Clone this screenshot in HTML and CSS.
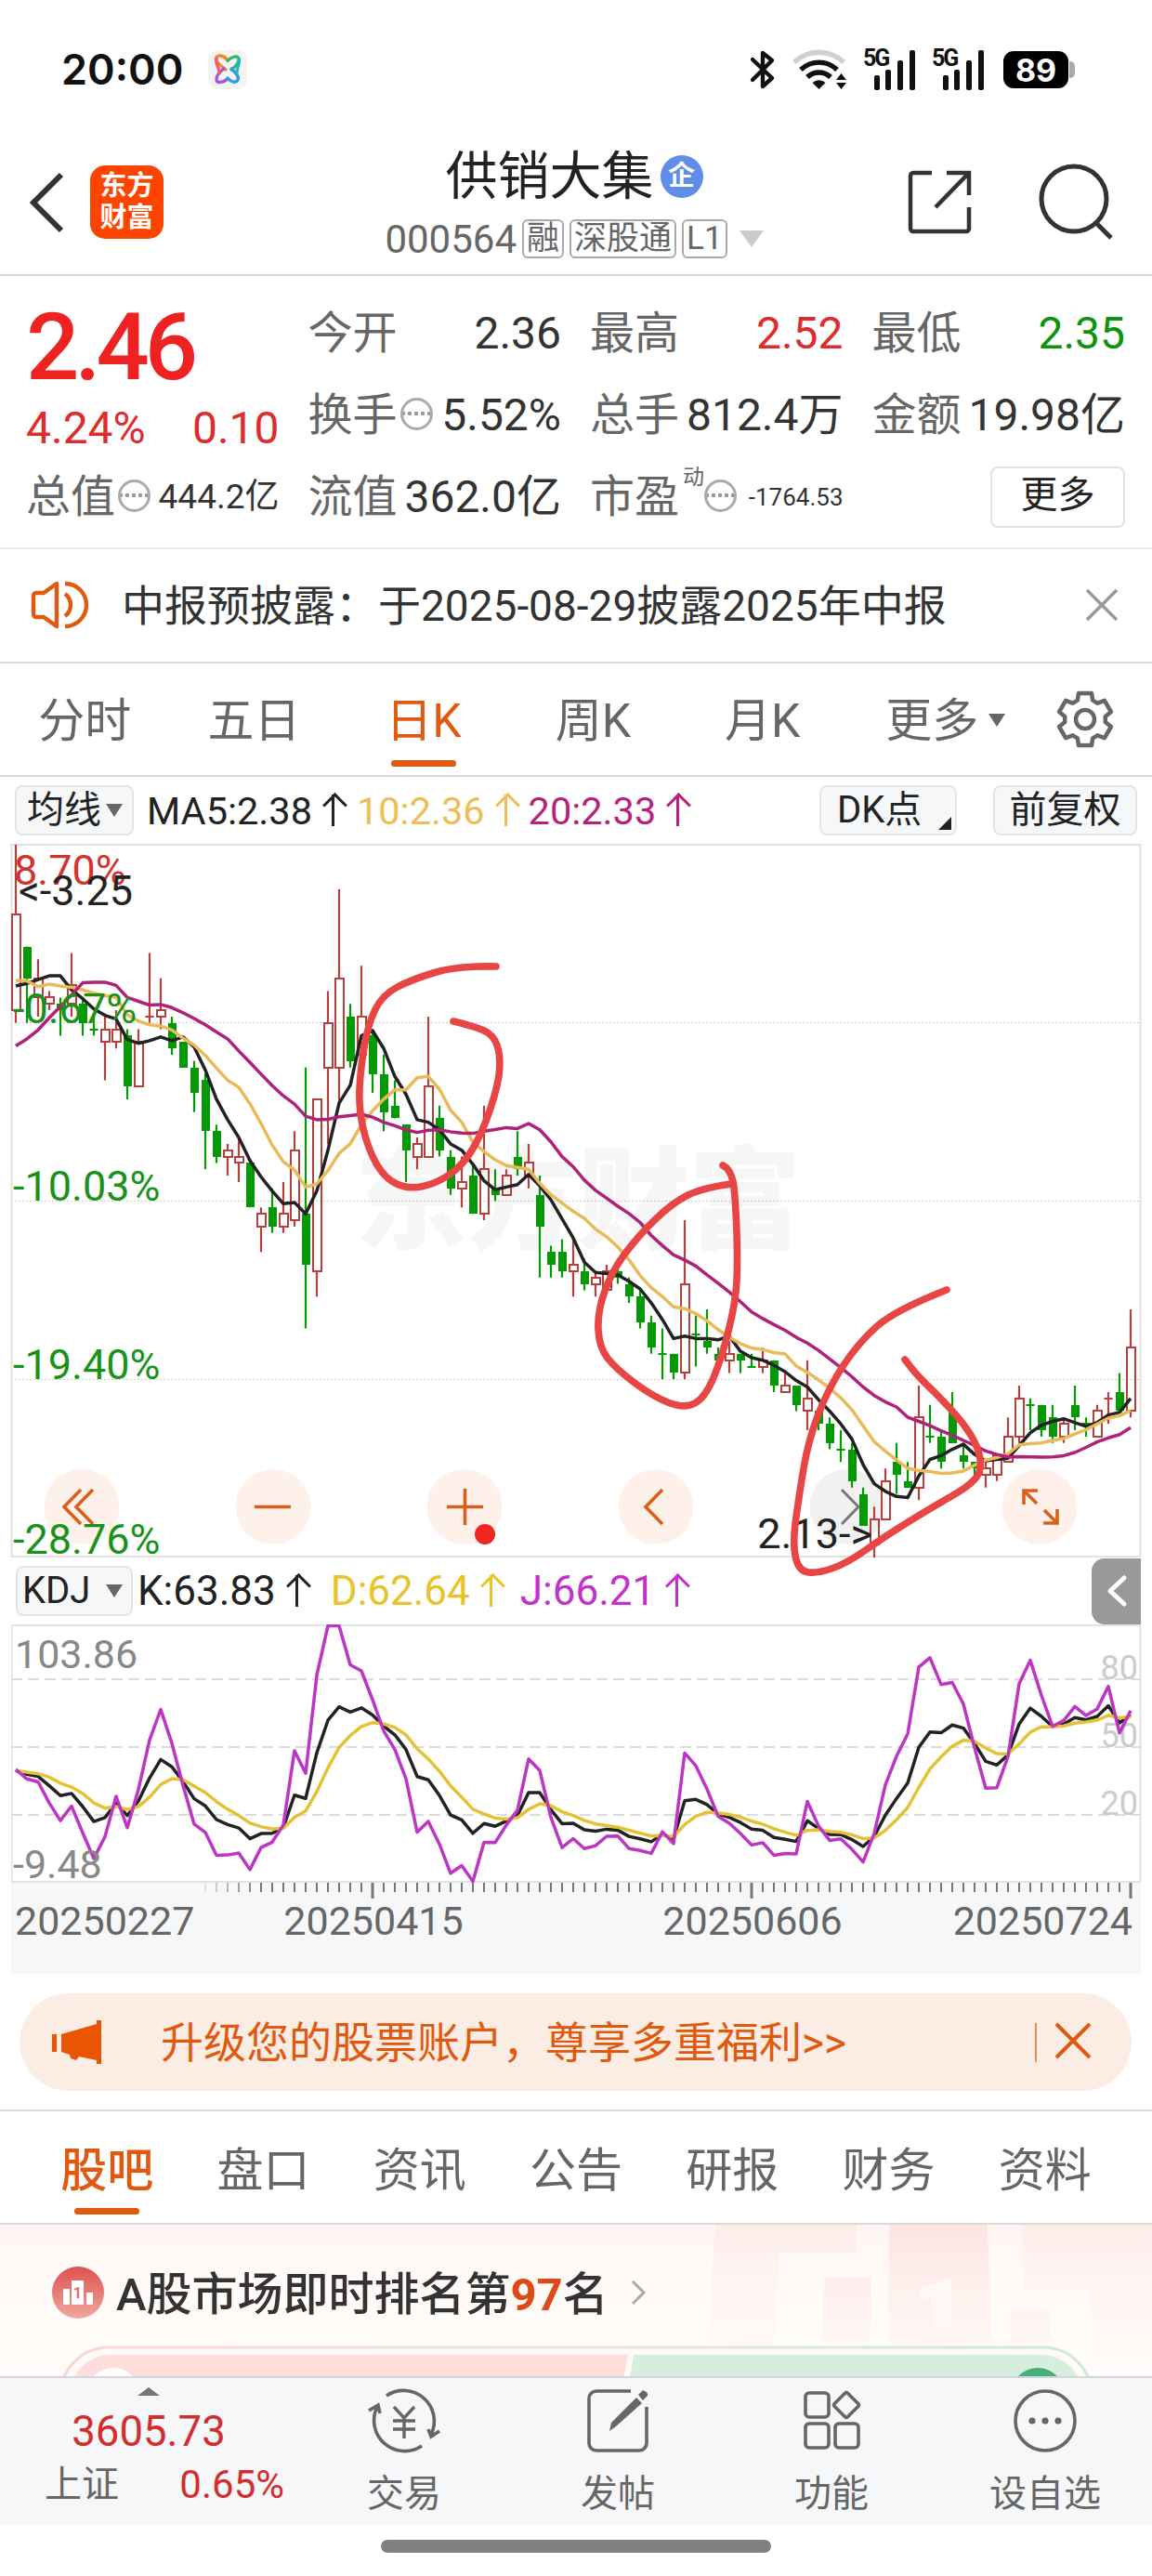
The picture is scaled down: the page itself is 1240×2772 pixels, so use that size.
FILE: index.html
```
<!DOCTYPE html>
<html lang="zh-CN">
<head>
    <meta charset="UTF-8">
    <meta name="viewport" content="width=device-width, initial-scale=1.0">
    <title>供销大集 000564</title>
    <link rel="stylesheet" href="styles.css">
</head>
<body>

<div class="status-bar">
    <span class="clock">20:00</span>
    <svg class="app-dot" width="42" height="42" viewBox="0 0 42 42" fill="none" stroke-width="3.4">
        <rect width="42" height="42" rx="10" fill="#f3f3f3"/>
        <path d="M20 22C12 15 7 12 9 8s9-2 13 4" stroke="#f08a2c"/>
        <path d="M20 12c5-5 12-7 13-3s-4 9-9 13" stroke="#35b86b"/>
        <path d="M22 30c-5 5-12 6-13 2s4-9 9-13" stroke="#a05be0"/>
        <path d="M24 19c5 5 10 9 8 13s-8 2-12-3" stroke="#2f9ce8"/>
        <path d="M9 8c-2 7 4 10 3 18" stroke="#ef5b6c"/>
        <path d="M33 9c2 6-3 10-2 17" stroke="#27b5c4"/>
    </svg>
    <div class="status-icons">
        <svg width="30" height="44" viewBox="0 0 30 44" fill="none" stroke="#111" stroke-width="4.4" stroke-linejoin="round" stroke-linecap="round">
            <path d="M4 11l21 20-10 9V4l10 8L4 33"/>
        </svg>
        <svg class="wifi" width="60" height="44" viewBox="0 0 60 44" fill="none" stroke-width="5.4">
            <path d="M2 14a38 38 0 0 1 53 0" stroke="#d0d0d0"/>
            <path d="M9 22a28 28 0 0 1 39 0" stroke="#111"/>
            <path d="M16 30a18 18 0 0 1 25 0" stroke="#111"/>
            <path d="M28.500 43l-7-7a10 10 0 0 1 14 0z" fill="#111"/>
            <path d="M47 33l5.500-7 5.500 7zM47 36l5.500 7 5.500-7z" fill="#111"/>
        </svg>
        <div class="signal"><b>5G</b><svg width="57" height="44" viewBox="0 0 57 44" fill="#111"><rect x="12" y="28" width="6" height="16" rx="2"/><rect x="24" y="22" width="6" height="22" rx="2"/><rect x="37" y="12" width="6" height="32" rx="2"/><rect x="50" y="1" width="6" height="43" rx="2"/></svg></div>
        <div class="signal"><b>5G</b><svg width="57" height="44" viewBox="0 0 57 44" fill="#111"><rect x="12" y="28" width="6" height="16" rx="2"/><rect x="24" y="22" width="6" height="22" rx="2"/><rect x="37" y="12" width="6" height="32" rx="2"/><rect x="50" y="1" width="6" height="43" rx="2"/></svg></div>
        <span class="battery">89</span><i class="battery-cap"></i>
    </div>
</div>

<header>
    <svg class="back" width="40" height="66" viewBox="0 0 40 66" fill="none" stroke="#333" stroke-width="6"><path d="M36 3L6 33l30 30"/></svg>
    <div class="logo">东方<br>财富</div>
    <div class="title">
        <div class="name">供销大集<span class="qi">企</span></div>
        <div class="code">000564<span class="tag">融</span><span class="tag">深股通</span><span class="tag">L1</span><i class="tri big"></i></div>
    </div>
    <svg class="share" width="72" height="72" viewBox="0 0 72 72" fill="none" stroke="#333" stroke-width="4.500">
        <path d="M27 4H7a3 3 0 0 0-3 3v57a3 3 0 0 0 3 3h57a3 3 0 0 0 3-3V41M43 4h24v24M67 4L31 41"/>
    </svg>
    <svg class="search" width="84" height="84" viewBox="0 0 84 84" fill="none" stroke="#333" stroke-width="5"><circle cx="39" cy="38" r="35"/><path d="M63 64l16 16"/></svg>
</header>

<section class="quote">
    <div class="last">
        <div class="price">2.46</div>
        <div class="change"><span>4.24%</span><span>0.10</span></div>
    </div>
    <div class="cell"><label>今开</label><span>2.36</span></div>
    <div class="cell"><label>最高</label><span class="red">2.52</span></div>
    <div class="cell"><label>最低</label><span class="green">2.35</span></div>
    <div class="cell"><label>换手<i class="info"></i></label><span>5.52%</span></div>
    <div class="cell"><label>总手</label><span>812.4万</span></div>
    <div class="cell"><label>金额</label><span>19.98亿</span></div>
    <div class="cell"><label>总值<i class="info"></i></label><span class="mid">444.2亿</span></div>
    <div class="cell"><label>流值</label><span>362.0亿</span></div>
    <div class="cell"><label>市盈<sup>动</sup><i class="info"></i></label><span class="small">-1764.53</span></div>
    <div class="cell end"><button class="more">更多</button></div>
</section>

<section class="notice">
    <svg width="62" height="54" viewBox="0 0 62 54" fill="none" stroke="#e0590f" stroke-width="4.400" stroke-linejoin="round">
        <path d="M28 4L14 14H6a3 3 0 0 0-3 3v20a3 3 0 0 0 3 3h8l14 10zM37 15a15 15 0 0 1 0 24M37 4a23 23 0 0 1 0 46"/>
    </svg>
    <span>中报预披露：于2025-08-29披露2025年中报</span>
    <svg class="close" width="36" height="36" viewBox="0 0 36 36" stroke="#999" stroke-width="3.500"><path d="M2 2l32 32M34 2L2 34"/></svg>
</section>

<nav class="periods">
    <span>分时</span>
    <span>五日</span>
    <span class="active">日K</span>
    <span>周K</span>
    <span>月K</span>
    <span>更多<i class="tri"></i></span>
    <svg class="gear" width="64" height="64" viewBox="-32 -32 64 64" fill="none" stroke="#666" stroke-width="4.500" stroke-linejoin="round">
        <path id="gear"/>
        <circle r="10"/>
    </svg>
</nav>

<div class="ma-row">
    <button>均线<i class="tri"></i></button>
    <span class="ma5">MA5:2.38<i class="up"></i></span>
    <span class="ma10">10:2.36<i class="up"></i></span>
    <span class="ma20">20:2.33<i class="up"></i></span>
    <button class="dk">DK点<i class="corner"></i></button>
    <button class="fq">前复权</button>
</div>

<svg class="kline" id="kline" width="1217" height="768" viewBox="12 908 1217 768"></svg>

<div class="kdj-row">
    <button>KDJ<i class="tri"></i></button>
    <span class="k">K:63.83<i class="up"></i></span>
    <span class="d">D:62.64<i class="up"></i></span>
    <span class="j">J:66.21<i class="up"></i></span>
    <div class="drawer"><svg width="24" height="36" viewBox="0 0 24 36" fill="none" stroke="#fff" stroke-width="5" stroke-linecap="round" stroke-linejoin="round"><path d="M19 4L4 18l15 14"/></svg></div>
</div>

<svg class="kdj" id="kdj" width="1217" height="376" viewBox="12 1748 1217 376"></svg>

<div class="promo">
    <svg width="56" height="48" viewBox="0 0 56 48" fill="#ea5504"><path d="M1 15h5v19H1zM11 15L49 4V0h5v47h-5v-4l-19-4-3 4-6-2-1-4-9-3z"/></svg>
    <span>升级您的股票账户，尊享多重福利&gt;&gt;</span>
    <i class="bar"></i>
    <svg class="x" width="40" height="40" viewBox="0 0 40 40" stroke="#e0590f" stroke-width="4"><path d="M2 2l36 36M38 2L2 38"/></svg>
</div>

<nav class="sections">
    <span class="active">股吧</span>
    <span>盘口</span>
    <span>资讯</span>
    <span>公告</span>
    <span>研报</span>
    <span>财务</span>
    <span>资料</span>
</nav>

<section class="rank">
    <svg class="podium" width="1240" height="164" viewBox="0 0 1240 164">
        <defs>
            <linearGradient id="fade" x2="0" y2="1"><stop offset="0" stop-color="#fbdedd" stop-opacity=".75"/><stop offset="1" stop-color="#fdeeea" stop-opacity=".35"/></linearGradient>
            <linearGradient id="edge"><stop offset="0" stop-color="#f8d6d2"/><stop offset=".5" stop-color="#e8e6da"/><stop offset="1" stop-color="#cfe9d8"/></linearGradient>
        </defs>
        <g fill="url(#fade)">
            <path opacity=".5" d="M770 0h152v30h-84l-5 110h-73zM1099 0h141v140h-62l-6-70h-70z"/>
            <path d="M957 0h106l4 128H956z"/>
            <path opacity=".7" d="M888 57h49v71h-52zM1088 91h42v40h-44z"/>
        </g>
        <path fill="#fff8f5" d="M991 68l33-11v55h-21V77l-12 5z"/>
        <rect x="65" y="132" width="1110" height="104" rx="52" fill="#fffaf7" stroke="url(#edge)" stroke-width="3"/>
        <path fill="#fddedb" d="M75 184a44 44 0 0 1 44-44h557l-8 40z"/>
        <path fill="#d7eedd" d="M682 140h440a44 44 0 0 1 43 44H675z"/>
        <circle cx="122" cy="183" r="29" fill="#fff"/>
        <circle cx="1117" cy="183" r="29" fill="#45ae79"/>
    </svg>
    <div class="rank-title">
        <svg width="56" height="56" viewBox="0 0 56 56">
            <defs><linearGradient id="medal" x2="0" y2="1"><stop offset="0" stop-color="#dc5350"/><stop offset="1" stop-color="#f2a6a0"/></linearGradient></defs>
            <circle cx="28" cy="28" r="28" fill="url(#medal)"/>
            <path fill="#fff" d="M12 24h7v17h-7zM21 15h13v26H21zM37 28h7v13h-7z"/>
            <text class="medal-no" x="27.500" y="34">1</text>
        </svg>
        <span>A股市场即时排名第<b>97</b>名</span>
        <svg class="go" width="20" height="30" viewBox="0 0 20 30" fill="none" stroke="#aaa" stroke-width="3"><path d="M3 3l12 12L3 27"/></svg>
    </div>
</section>

<footer>
    <div class="index">
        <i class="tri-up"></i>
        <div class="index-value">3605.73</div>
        <div class="index-line"><span>上证</span><em>0.65%</em></div>
    </div>
    <div class="item">
        <svg width="80" height="72" viewBox="-40 -36 80 72" fill="none" stroke="#666" stroke-width="3.600">
            <path d="M-19-27A33 33 0 0 1 29 15M19 27A33 33 0 0 1-29-15M-38-11l10-6 2 9M38 11l-9 6-3-8"/>
            <path d="M-11-15L0-3l11-12M0-3v22M-12 0h24M-12 9h24" stroke-width="3.400"/>
        </svg>
        <span>交易</span>
    </div>
    <div class="item">
        <svg width="80" height="72" viewBox="-40 -36 80 72" fill="none" stroke="#666" stroke-width="3.600">
            <path d="M14-32h-37a8 8 0 0 0-8 8v48a8 8 0 0 0 8 8h46a8 8 0 0 0 8-8v-39"/>
            <path d="M-9 11l2-9 27-27 6 6L-2 6z" fill="#666" stroke="none"/>
            <path d="M22-28l5-5q6 2 5 6l-5 5z" fill="#666" stroke="none"/>
        </svg>
        <span>发帖</span>
    </div>
    <div class="item">
        <svg width="80" height="72" viewBox="-40 -36 80 72" fill="none" stroke="#666" stroke-width="3.600" stroke-linejoin="round">
            <rect x="-28" y="-30" width="25" height="26" rx="4"/>
            <rect x="-28" y="3" width="25" height="26" rx="4"/>
            <rect x="4" y="3" width="25" height="26" rx="4"/>
            <rect x="6" y="-27" width="20" height="20" rx="2" transform="rotate(45 16 -17)"/>
        </svg>
        <span>功能</span>
    </div>
    <div class="item">
        <svg width="80" height="72" viewBox="-40 -36 80 72" fill="none" stroke="#666" stroke-width="3.600">
            <circle r="32"/>
            <g fill="#666" stroke="none"><circle cx="-14" r="3.600"/><circle r="3.600"/><circle cx="14" r="3.600"/></g>
        </svg>
        <span>设自选</span>
    </div>
</footer>
<div class="home"></div>

<script src="chart.js"></script>
</body>
</html>
```

FILE: styles.css
```
* {
    box-sizing: border-box;
}

body {
    margin: 0;
    width: 1240px;
    height: 2772px;
    overflow: hidden;
    background: #fff;
    color: #333;
    font-family: Roboto, "Noto Sans CJK SC", sans-serif;
    font-size: 46px;
}

i, em {
    font-style: normal;
}

button {
    font-family: inherit;
    color: #222;
    margin: 0;
}

svg {
    display: block;
    flex: none;
}

/* status bar */
.status-bar {
    height: 140px;
    padding: 9px 83px 0 66px;
    display: flex;
    align-items: center;
}

.clock {
    font-family: Inter, sans-serif;
    font-weight: 600;
    font-size: 45px;
    color: #111;
    width: 158px;
}

.status-icons {
    margin-left: auto;
    display: flex;
    align-items: center;
}

.wifi {
    margin-left: 17px;
}

.signal {
    position: relative;
    margin-left: 16px;
}

.signal + .signal {
    margin-left: 17px;
}

.signal b {
    position: absolute;
    left: 0;
    top: -3px;
    font: 700 25px/25px Roboto, sans-serif;
    color: #111;
    letter-spacing: -2px;
}

.battery {
    margin-left: 20px;
    width: 70px;
    height: 40px;
    border-radius: 11px;
    background: #000;
    color: #fff;
    font: 700 34px/41px Inter, sans-serif;
    text-align: center;
}

.battery-cap {
    width: 6px;
    height: 18px;
    margin-left: 1px;
    border-radius: 0 5px 5px 0;
    background: #aaa;
}

/* header */
header {
    height: 157px;
    border-bottom: 2px solid #d9d9d9;
    display: flex;
    padding-left: 30px;
}

.back {
    margin-top: 45px;
}

.logo {
    width: 79px;
    height: 79px;
    margin: 38px 0 0 27px;
    padding-top: 5px;
    border-radius: 16px;
    background: #ff4400;
    color: #fff;
    font-size: 29px;
    font-weight: 700;
    line-height: 34px;
    text-align: center;
}

.title {
    width: 640px;
    margin-left: 122px;
    display: flex;
    flex-direction: column;
    align-items: center;
}

.name {
    height: 86px;
    padding-top: 14px;
    font-size: 56px;
    line-height: 68px;
    color: #222;
    display: flex;
    align-items: center;
}

.qi {
    width: 46px;
    height: 46px;
    margin-left: 7px;
    border-radius: 50%;
    background: #5f8de8;
    color: #fff;
    font-size: 29px;
    font-weight: 700;
    line-height: 44px;
    text-align: center;
}

.code {
    display: flex;
    align-items: center;
    height: 62px;
    font-size: 42px;
    color: #666;
}

.tag {
    height: 42px;
    margin-left: 6px;
    padding: 0 3px;
    border: 2px solid #aaa;
    border-radius: 6px;
    font-size: 35px;
    line-height: 37px;
}

.tri {
    display: inline-block;
    border: 9px solid transparent;
    border-top: 14px solid #666;
    border-bottom: 0;
}

.tri.big {
    margin-left: 13px;
    border-width: 18px 13px 0;
    border-top-color: #ccc;
}

.share {
    margin: 42px 0 0 38px;
}

.search {
    margin: 36px 0 0 69px;
}

/* quote grid */
.quote {
    height: 294px;
    padding: 18px 29px 0 28px;
    border-bottom: 2px solid #ececec;
    display: grid;
    grid-template-columns: repeat(4, 1fr);
    grid-auto-rows: 88px;
    column-gap: 31px;
}

.last {
    grid-row: span 2;
    color: #ef2222;
}

.price {
    margin-top: 4px;
    font-size: 101px;
    font-weight: 500;
    line-height: 110px;
    letter-spacing: -5px;
}

.change {
    display: flex;
    justify-content: space-between;
    font-size: 48px;
    line-height: 64px;
    color: #df2b2b;
}

.cell {
    display: flex;
    justify-content: space-between;
    font-size: 48px;
    line-height: 88px;
    white-space: nowrap;
}

.cell label {
    color: #666;
    display: flex;
    align-items: center;
    position: relative;
}

.cell sup {
    font-size: 23px;
    line-height: 26px;
    margin: -42px -3px 0 4px;
}

.cell .mid {
    font-size: 37px;
}

.cell .small {
    font-size: 26px;
}

.cell.end {
    justify-content: flex-end;
    align-items: center;
}

.red {
    color: #df2b2b;
}

.green {
    color: #0c940c;
}

.info {
    width: 35px;
    height: 35px;
    margin: -3px 0 0 3px;
    border: 3px solid #aaa;
    border-radius: 50%;
    background: radial-gradient(circle at 3px 3px, #999 2px, transparent 2.6px) 4px 11px / 7px 7px repeat-x;
}

.more {
    width: 145px;
    height: 66px;
    border: 2px solid #e2e2e2;
    border-radius: 8px;
    background: #fff;
    font-size: 40px;
    line-height: 56px;
    padding: 0 0 5px;
}

/* notice */
.notice {
    height: 123px;
    padding: 0 36px 2px 33px;
    border-bottom: 2px solid #d9d9d9;
    display: flex;
    align-items: center;
}

.notice span {
    margin: -6px 0 0 36px;
}

.notice .close {
    margin-left: auto;
}

/* tabs */
.periods {
    height: 122px;
    border-bottom: 2px solid #d9d9d9;
    display: grid;
    grid-template-columns: repeat(6, 182.4px) 1fr;
    align-items: center;
    text-align: center;
    color: #666;
    font-size: 50px;
    line-height: 125px;
}

.periods span {
    height: 120px;
}

nav span {
    position: relative;
}

nav .tri {
    position: absolute;
    right: 12px;
    top: 54px;
}

nav .active {
    color: #e0590f;
}

nav .active::after {
    content: "";
    position: absolute;
    left: 50%;
    bottom: 9px;
    width: 70px;
    height: 7px;
    margin-left: -35px;
    border-radius: 4px;
    background: #e0590f;
}

.gear {
    margin-left: 42px;
}

/* indicator rows */
.ma-row, .kdj-row {
    display: flex;
    align-items: center;
    height: 72px;
    padding-left: 16px;
    font-size: 41.5px;
    white-space: nowrap;
}

.ma-row button, .kdj-row button {
    height: 54px;
    width: 128px;
    padding: 0 10px 0 11px;
    border: 2px solid #e1e4e9;
    border-radius: 8px;
    background: #f6f7f9;
    font-size: 40px;
    line-height: 48px;
    display: flex;
    align-items: center;
    justify-content: space-between;
}

.ma-row span, .kdj-row span {
    display: flex;
    align-items: center;
}

.up {
    width: 22px;
    height: 34px;
    margin-left: 12px;
    background: linear-gradient(currentColor, currentColor) center / 3px 100% no-repeat;
    position: relative;
}

.up::before {
    content: "";
    position: absolute;
    left: 3px;
    top: 2px;
    width: 16px;
    height: 16px;
    border-left: 3px solid;
    border-top: 3px solid;
    transform: rotate(45deg);
}

.ma5 {
    margin-left: 14px;
    color: #222;
}

.ma10 {
    margin-left: 14px;
    color: #efbd55;
}

.ma20 {
    margin-left: 13px;
    color: #b8217b;
}

.ma-row .dk {
    margin-left: auto;
    width: 148px;
    padding: 0 4px 0 17px;
}

.corner {
    align-self: flex-end;
    margin-bottom: 4px;
    border-left: 14px solid transparent;
    border-bottom: 14px solid #222;
}

.ma-row .fq {
    width: 155px;
    margin: 0 16px 0 39px;
    justify-content: center;
    padding: 0;
}

.kline {
    margin-left: 12px;
    position: relative;
    z-index: 1;
    overflow: visible;
}

.kdj-row {
    padding-left: 17px;
    font-size: 44px;
}

.kdj-row button {
    width: 126px;
    padding: 0 9px 0 5px;
}

.k {
    margin-left: 5px;
    color: #222;
}

.d {
    margin-left: 25px;
    color: #e8c42c;
}

.j {
    margin-left: 20px;
    color: #c430cc;
}

.drawer {
    width: 53px;
    height: 71px;
    margin: 0 12px 0 auto;
    padding: 17px 0 0 16px;
    border-radius: 14px 0 0 14px;
    background: #999;
}

.kdj {
    margin-left: 12px;
}

/* chart text and shapes */
.label {
    font-size: 43px;
}

.percent {
    font-size: 45px;
}

.level {
    font-size: 36px;
    fill: #ccc;
}

.watermark {
    font-size: 120px;
    font-weight: 900;
    fill: #f6f6f6;
}

.line {
    fill: none;
    stroke-width: 3.5;
    stroke-linejoin: round;
}

.pen {
    fill: none;
    stroke: #e84545;
    stroke-width: 7.6;
    stroke-linecap: round;
    stroke-linejoin: round;
}

/* promo */
.promo {
    width: 1197px;
    height: 105px;
    margin: 21px 0 20px 21px;
    padding: 0 43px 0 34px;
    border-radius: 53px;
    background: #fcede4;
    color: #e0590f;
    display: flex;
    align-items: center;
}

.promo span {
    margin: -7px 0 0 62px;
}

.promo .bar {
    width: 2px;
    height: 42px;
    margin-left: auto;
    background: #e88a55;
}

.promo .x {
    margin: -3px 0 0 19px;
}

.sections {
    height: 124px;
    padding: 0 31px;
    border-top: 2px solid #d9d9d9;
    border-bottom: 2px solid #d9d9d9;
    display: grid;
    grid-template-columns: repeat(7, 1fr);
    grid-template-rows: 120px;
    text-align: center;
    color: #666;
    font-size: 50px;
    line-height: 128px;
}

.sections .active {
    font-weight: 500;
}

/* rank card */
.rank {
    position: relative;
    height: 163px;
    overflow: hidden;
    background: linear-gradient(#fff5f3, #fffaf7 30%, #fffcfa);
}

.podium {
    position: absolute;
    left: 0;
    top: 0;
}

.rank-title {
    position: relative;
    display: flex;
    align-items: center;
    height: 146px;
    padding-left: 56px;
    font-size: 49px;
    font-weight: 500;
}

.rank-title span {
    margin: -6px 0 0 13px;
}

.rank-title b {
    color: #dc4a18;
}

.go {
    margin-left: 23px;
}

.medal-no {
    font-size: 17px;
    font-weight: 700;
    text-anchor: middle;
    fill: #e2706b;
}

/* bottom bar */
footer {
    height: 160px;
    border-top: 2px solid #d3d6dc;
    background: #f6f7f9;
    display: grid;
    grid-template-columns: 320px repeat(4, 230px);
    color: #666;
    font-size: 40px;
}

.index {
    padding-top: 10px;
    display: flex;
    flex-direction: column;
    align-items: center;
}

.tri-up {
    border: 12px solid transparent;
    border-bottom: 9px solid #777;
    border-top: 0;
}

.index-value {
    margin-top: 12px;
    font-size: 45.5px;
    line-height: 54px;
    color: #d22e2e;
}

.index-line {
    width: 258px;
    margin-left: 34px;
    line-height: 60px;
    display: flex;
    justify-content: space-between;
}

.index-line em {
    font-size: 42px;
    color: #d22e2e;
}

.item {
    padding-top: 10px;
    display: flex;
    flex-direction: column;
    align-items: center;
}

.item span {
    margin-top: 15px;
    line-height: 56px;
}

.home {
    width: 420px;
    height: 14px;
    margin: 16px auto 0;
    border-radius: 7px;
    background: #808080;
}
```

FILE: chart.js
```
// Each bar: [high, body top, body bottom, low, up], in cents above 2.13
const bars = [
    [112,101,86,84,1],[96,96,91,84,0],[94,91,88,85,1],[89,88,87,86,1],[88,87,86,82,0],
    [95,90,87,85,1],[88,87,84,82,0],[85,83,83,82,0],[85,83,81,75,1],[86,83,81,80,1],
    [83,82,74,72,0],[83,81,74,74,1],[95,85,85,84,1],[91,86,85,83,1],[85,84,80,79,0],
    [81,81,77,77,0],[78,77,73,70,0],[76,75,67,61,0],[68,67,63,62,0],[65,64,63,60,1],
    [66,63,62,59,1],[62,62,55,55,0],[55,54,52,48,1],[58,55,52,51,0],[59,54,52,51,1],
    [67,64,53,52,1],[77,54,46,36,0],[72,72,45,41,1],[89,84,77,65,1],[105,91,77,71,1],
    [87,85,78,77,0],[93,85,79,77,1],[83,82,76,73,0],[79,76,70,67,0],[75,71,69,69,0],
    [68,68,64,59,0],[66,65,63,61,1],[85,74,63,63,1],[71,69,64,63,0],[64,63,58,57,0],
    [63,59,58,55,1],[62,60,54,54,0],[71,61,54,53,1],[61,58,57,56,0],[61,60,57,57,1],
    [67,63,61,60,0],[65,62,60,58,1],[60,57,52,44,0],[49,48,46,44,0],[50,48,45,44,0],
    [50,46,45,41,1],[47,45,43,42,0],[45,44,43,41,1],[46,45,42,42,1],[47,45,44,43,0],
    [44,43,41,40,0],[42,41,37,36,0],[38,37,33,32,0],[36,32,32,28,0],[32,32,29,28,0],
    [53,43,29,28,1],[38,35,35,30,0],[39,34,33,32,0],[33,32,31,31,0],[34,32,31,29,1],
    [32,32,31,29,0],[32,30,30,30,0],[33,31,30,29,1],[31,31,27,26,0],[29,27,26,26,1],
    [27,27,24,23,0],[31,25,23,20,1],[23,23,21,20,0],[22,21,18,17,0],[20,17,17,15,0],
    [18,17,12,11,0],[11,10,5,5,0],[8,6,2,0,1],[14,12,6,6,1],[18,15,13,10,0],
    [15,12,11,11,0],[27,22,11,9,1],[24,19,19,18,0],[20,19,15,14,0],[26,23,18,18,0],
    [18,16,15,14,0],[15,15,14,13,0],[15,14,13,11,1],[16,16,13,12,1],[22,19,15,15,1],
    [27,25,19,18,1],[25,24,24,20,0],[24,24,20,19,0],[24,22,19,18,0],[22,21,19,18,1],
    [27,24,22,20,0],[22,21,21,19,0],[24,23,19,19,1],[26,25,25,21,1],[29,26,23,23,0],
    [39,33,23,22,1]
];
// averages for the bars whose window starts before the chart
const seed5 = [89.8, 90.2, 90.8, 91.4];
const seed10 = [90.7, 90.6, 89.7, 90.1, 89.8, 89.6, 89.2, 88.7, 88.3];
const seed20 = [80.4, 81.5, 82.9, 84.8, 86.6, 88.4, 90.3, 90.4, 90.4, 89.9, 88, 87.4, 86.8, 86.9, 86.4, 85.6, 84.7, 83.7, 82.6];
const kVals = [39.7, 37.9, 37, 32.9, 28.5, 29.5, 23.7, 17.1, 18.8];
const dVals = [39.5, 38.9, 38.2, 36.7, 34, 32.3, 29.5, 25.3, 23];

const x = i => 17 + i * 12;
const y = n => 1676 - n * 6.848;
const yk = v => Math.max(1749.5, Math.min(2024.5, 1953 - (v - 20) * 2.433));
const close = bars.map(b => b[4] ? b[1] : b[2]);

function average(n, seed) {
    return close.map((c, i) => i < n - 1 ? seed[i] : close.slice(i - n + 1, i + 1).reduce((a, b) => a + b) / n);
}

function line(values, scale, color) {
    return `<polyline class="line" stroke="${color}" points="${values.map((v, i) => x(i) + ',' + scale(v).toFixed(1)).join(' ')}"/>`;
}

function hline(yy, color, dash) {
    return `<path d="M12 ${yy}H1228" stroke="${color}" stroke-width="${dash === '2 2' ? 1 : 2}" ${dash ? `stroke-dasharray="${dash}"` : ''}/>`;
}

function text(tx, ty, str, color, anchor, cls) {
    return `<text x="${tx}" y="${ty}" class="${cls || 'label'}" fill="${color}" text-anchor="${anchor || 'start'}">${str}</text>`;
}

function candle(b, i) {
    const color = b[4] ? '#b5403c' : '#059a05';
    const top = Math.round(y(b[1])), bottom = Math.round(y(b[2]));
    let out = `<path stroke="${color}" stroke-width="2.200" fill="none" d="M${x(i)} ${y(b[0])}V${top}M${x(i)} ${bottom}V${y(b[3])}`;
    if (b[1] === b[2]) {
        return out + `M${x(i) - 4.500} ${top}h9"/>`;
    }
    out += '"/>';
    if (b[4]) {
        return out + `<rect x="${x(i) - 4}" y="${top}" width="9" height="${bottom - top}" fill="none" stroke="${color}" stroke-width="2"/>`;
    }
    return out + `<rect x="${x(i) - 4}" y="${top}" width="9" height="${bottom - top}" fill="${color}"/>`;
}

// smooth hand-drawn stroke through the points
function pen(p) {
    let d = `M${p[0]}`;
    for (let i = 1; i < p.length - 1; i++) {
        const end = i === p.length - 2 ? p[i + 1] : [(p[i][0] + p[i + 1][0]) / 2, (p[i][1] + p[i + 1][1]) / 2];
        d += `Q${p[i]} ${end}`;
    }
    return `<path class="pen" d="${d}"/>`;
}

function drawKline() {
    let s = text(382, 1335, '东方财富', '#f6f6f6', 'start', 'watermark');
    s += [1100.5, 1292.5, 1484.5].map(v => hline(v, '#ccc', '2 2')).join('');
    s += '<path d="M12.500 909H1227.500V1675H12.500z" fill="none" stroke="#e2e2e2" stroke-width="2"/>';

    [88, 294, 500, 706, 912, 1119].forEach((cx, i) => {
        s += `<circle cx="${cx}" cy="1621.500" r="40.500" fill="${i === 4 ? '#f1f1f1' : '#fef1ea'}"/>`;
    });
    s += '<g fill="none" stroke="#db5f1c" stroke-width="3.600">'
        + '<path d="M87 1603l-18 18.500 18 18.500M100 1603l-18 18.500 18 18.500"/>'
        + '<path d="M274 1621.500h39M481 1621.500h39M500.500 1602v39M713 1603l-18 18.500 18 18.500"/>'
        + '<path d="M1102 1619v-15h15M1102 1604l14 14M1138 1624v15h-15M1138 1639l-14-14"/></g>'
        + '<path d="M906 1603l18 18.500-18 18.500" fill="none" stroke="#777" stroke-width="3"/>'
        + '<circle cx="522" cy="1651" r="11" fill="#f02622"/>';

    s += bars.map(candle).join('');
    s += line(average(5, seed5), y, '#222');
    s += line(average(10, seed10), y, '#eaba58');
    s += line(average(20, seed20), y, '#b0227a');

    s += text(15, 952, '8.70%', '#cf3430', 'start', 'percent');
    s += text(14, 1101, '-0.67%', '#1a921a', 'start', 'percent');
    s += text(14, 1292, '-10.03%', '#1a921a', 'start', 'percent');
    s += text(14, 1484, '-19.40%', '#1a921a', 'start', 'percent');
    s += text(14, 1672, '-28.76%', '#1a921a', 'start', 'percent');
    s += text(20, 974, '&lt;-3.25', '#222', 'start', 'percent');
    s += text(939, 1666, '2.13-&gt;', '#222', 'end', 'percent');

    s += pen([[534,1040],[493,1039],[443,1054],[411,1071],[396,1103],[388,1150],[386,1193],[396,1236],[414,1268],[440,1280],[471,1273],[499,1253],[519,1219],[535,1172],[539,1142],[534,1118],[518,1106],[488,1099]]);
    s += pen([[778,1254],[788,1259],[792,1296],[794,1357],[792,1400],[777,1461],[759,1504],[737,1516],[703,1503],[663,1473],[645,1450],[643,1412],[658,1369],[686,1331],[724,1294],[757,1278],[787,1274]]);
    s += pen([[1019,1388],[963,1410],[924,1445],[892,1493],[870,1550],[860,1610],[853,1662],[860,1691],[881,1693],[912,1682],[953,1653],[1003,1622],[1042,1600],[1057,1583],[1053,1557],[1036,1530],[1009,1501],[985,1478],[974,1463]]);
    document.getElementById('kline').innerHTML = s;
}

function drawKdj() {
    for (let i = 9; i < bars.length; i++) {
        const win = bars.slice(i - 8, i + 1);
        const high = Math.max(...win.map(b => b[0]));
        const low = Math.min(...win.map(b => b[3]));
        const rsv = (close[i] - low) / (high - low) * 100;
        kVals[i] = (2 * kVals[i - 1] + rsv) / 3;
        dVals[i] = (2 * dVals[i - 1] + kVals[i]) / 3;
    }
    const jVals = kVals.map((k, i) => 3 * k - 2 * dVals[i]);

    let s = '<path d="M12 2025H1228V2124H12z" fill="#f6f7f9"/>';
    s += '<path d="M12.500 1749H1227.500V2025H12.500z" fill="none" stroke="#e2e2e2" stroke-width="2"/>';
    s += [1807, 1880, 1953].map(v => hline(v, '#dcdcdc', '12 6')).join('');
    s += text(1225, 1807, '80', '#ccc', 'end', 'level') + text(1225, 1880, '50', '#ccc', 'end', 'level') + text(1225, 1953, '20', '#ccc', 'end', 'level');
    s += line(kVals, yk, '#222') + line(dVals, yk, '#e5c235') + line(jVals, yk, '#bd35c5');
    s += text(16, 1795, '103.86', '#888') + text(14, 2021, '-9.48', '#888');

    for (let i = 17; i < bars.length; i++) {
        const major = i === 32 || i === 66 || i === 100;
        s += `<path d="M${x(i)} 2026v${major ? 17 : 10}" stroke="#777" stroke-width="${major ? 3 : 2}" opacity="${Math.min(1, (i - 16) / 6)}"/>`;
    }
    s += text(16, 2082, '20250227', '#666') + text(402, 2082, '20250415', '#666', 'middle')
        + text(810, 2082, '20250606', '#666', 'middle') + text(1219, 2082, '20250724', '#666', 'end');
    document.getElementById('kdj').innerHTML = s;
}

function drawGear() {
    const pts = [];
    for (let k = 0; k < 6; k++) {
        [[-22, 22], [-14, 29], [14, 29], [22, 22]].forEach(([a, r]) => {
            const t = (k * 60 + a) * Math.PI / 180;
            pts.push((r * Math.sin(t)).toFixed(1) + ' ' + (-r * Math.cos(t)).toFixed(1));
        });
    }
    document.getElementById('gear').setAttribute('d', 'M' + pts.join('L') + 'z');
}

drawKline();
drawKdj();
drawGear();
```
